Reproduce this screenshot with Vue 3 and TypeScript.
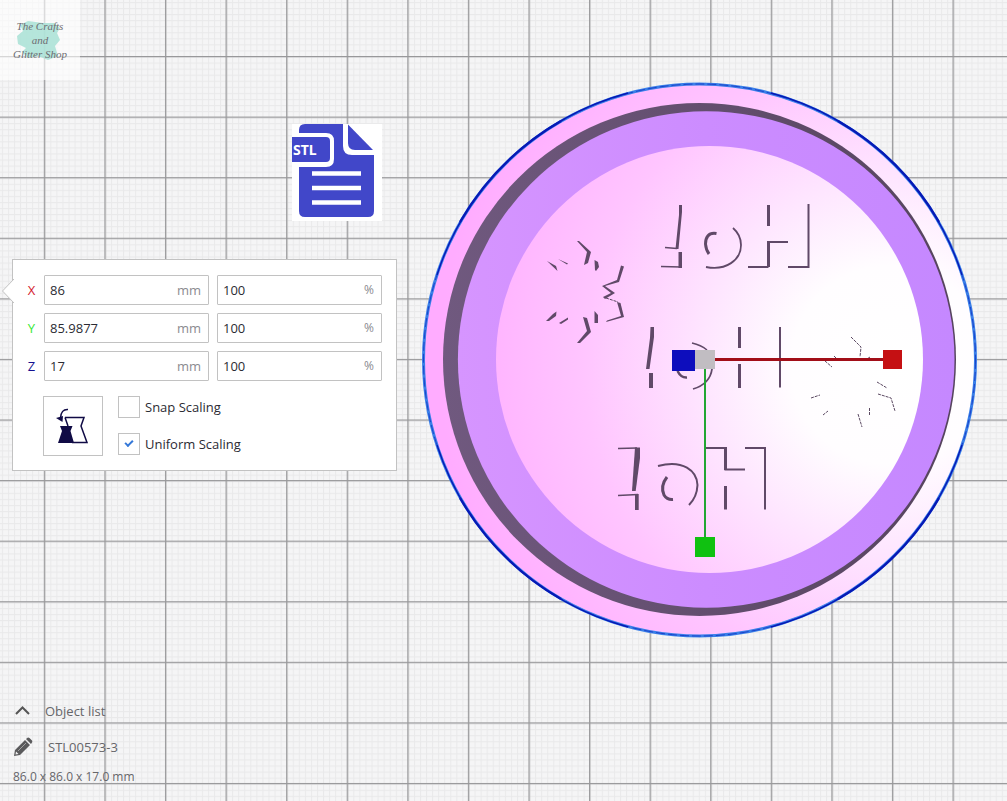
<script setup lang="ts">
import { ref } from 'vue'

interface Axis {
  name: string
  tone: string
  size: string
  percent: string
}

const axes = ref<Axis[]>([
  { name: 'X', tone: 'red', size: '86', percent: '100' },
  { name: 'Y', tone: 'green', size: '85.9877', percent: '100' },
  { name: 'Z', tone: 'blue', size: '17', percent: '100' },
])
const snapScaling = ref(false)
const uniformScaling = ref(true)
const listOpen = ref(false)
</script>

<template>
  <main class="viewport">
    <svg class="scene" viewBox="0 0 1007 801" preserveAspectRatio="xMidYMid slice" aria-hidden="true">
      <defs>
        <pattern id="minor" x="44.3" y="56.5" width="6.06" height="6.06" patternUnits="userSpaceOnUse">
          <path d="M0 .5H6.06M.5 0V6.06" stroke="#e9e9ea" stroke-width="1" fill="none" />
        </pattern>
        <pattern id="major" x="43.8" y="56" width="60.58" height="60.58" patternUnits="userSpaceOnUse">
          <path d="M0 .7H60.58M.7 0V60.58" stroke="#98989a" stroke-width="1.3" fill="none" />
        </pattern>
        <radialGradient id="pink" gradientUnits="userSpaceOnUse" cx="890" cy="365" r="450">
          <stop offset="0" stop-color="#ffffff" />
          <stop offset=".22" stop-color="#fffdff" />
          <stop offset=".42" stop-color="#fee5ff" />
          <stop offset=".68" stop-color="#ffc5ff" />
          <stop offset=".88" stop-color="#ffb5ff" />
          <stop offset="1" stop-color="#ffacff" />
        </radialGradient>
        <linearGradient id="purple" x1="0" x2="1" y1="0" y2="0">
          <stop offset="0" stop-color="#d695ff" />
          <stop offset=".5" stop-color="#cc8cff" />
          <stop offset="1" stop-color="#c588ff" />
        </linearGradient>
        <linearGradient id="wall" x1="0" x2="1" y1="0" y2="0">
          <stop offset="0" stop-color="#70597f" />
          <stop offset="1" stop-color="#56445e" />
        </linearGradient>
      </defs>

      <rect width="1007" height="801" fill="#f5f5f6" />
      <rect width="1007" height="801" fill="url(#minor)" />
      <rect width="1007" height="801" fill="url(#major)" />

      <!-- file badge -->
      <rect x="292" y="124" width="90" height="97" fill="#fff" />
      <path fill="#4147c9" d="M305 124H343V146Q343 155 352 155H374V211Q374 217 368 217H305Q299 217 299 211V167H326Q334 167 334 159V141Q334 133 326 133H299V130Q299 124 305 124Z" />
      <path fill="#4147c9" d="M348 124.500L373 150H355Q348 150 348 143Z" />
      <path fill="#4147c9" d="M292 137H326Q330 137 330 141V158Q330 162 326 162H292Z" />
      <path stroke="#fff" stroke-width="4.500" d="M312 173.500H361M312 188H361M312 202.500H361" />
      <text class="badge-text" x="293" y="155">STL</text>

      <!-- round mould -->
      <circle cx="699.500" cy="360" r="276" fill="url(#pink)" stroke="#397fe8" stroke-width="3" />
      <g fill="none" stroke="#0719b5">
        <circle cx="699.500" cy="360" r="276" stroke-width=".6" stroke-dasharray="9 3" />
        <path stroke-width="1.300" d="M437 275A276 276 0 0 1 628 93M771 93A276 276 0 0 1 962 275M962 445A276 276 0 0 1 771 627M628 627A276 276 0 0 1 437 445" />
        <path stroke-width="2.200" d="M460 222A276 276 0 0 1 561 121M838 121A276 276 0 0 1 939 222M939 498A276 276 0 0 1 838 599M561 599A276 276 0 0 1 460 498" />
      </g>
      <circle cx="699.500" cy="359.500" r="256.500" fill="url(#wall)" />
      <circle cx="706.200" cy="359.500" r="248.300" fill="url(#purple)" />
      <circle cx="709.500" cy="359.500" r="213.500" fill="url(#pink)" />

      <!-- relief shadows -->
      <g fill="none" stroke="#604968" stroke-width="2">
        <path d="M665 247.500L677 248.500M661 266.500L681 267" stroke-width="1.500" />
        <path d="M716.500 233.500C708 232 705.500 238 705.500 244Q706 250 709 254" stroke-width="3" />
        <path d="M706 267C726 271 741 260 741 245Q741 235 733 228" stroke-width="1.800" />
        <path d="M768.500 205V226M768.500 241V267" stroke-width="3" />
        <path d="M788 242H768.500M768.500 267H748M808.500 204V267H788" />
        <path d="M692 343Q701 345 707 350" stroke-width="1.500" />
        <path d="M677.500 371Q681 378 687 377.500" stroke-width="2.500" />
        <path d="M712 369Q710 384 693 389" stroke-width="1.800" />
        <path d="M739.500 327V348M739.500 364V388" stroke-width="3" />
        <path d="M780 327V387.500" />
        <path d="M618 448.500L637 448M618 495.500L638 494.500" stroke-width="1.500" />
        <path d="M658 466C683 459 697 471 697.500 485Q697 497 689 505" />
        <path d="M667 477Q660 486 664 495Q667 500 673 499.500" stroke-width="3" />
        <path d="M706 448H725.500V469.500H745M745 448H765V509.500" />
        <path d="M725.500 447V470M725.500 486V509.500" stroke-width="3" />
      </g>
      <g fill="#604968">
        <path d="M679 205H682V212L678.500 249H675.500L679 215Z" />
        <path d="M678.500 252H682V268H678.500Z" />
        <path d="M650.500 327H654V337L649.500 369H646L650 338Z" />
        <path d="M649 373H653V388H649Z" />
        <path d="M635 447.500H640V458L635.700 491H632Z" />
        <path d="M635 494H638.700V510H635Z" />
        <path d="M577 241L579 241L591 252L588 263L584 265L587 252Z" />
        <path d="M594.500 260L598 262L599 267L596 271L595 270Z" />
        <path d="M547 261L556 266L557.500 271Z" />
        <path d="M558 259L568 263.500L567 264.500Z" />
        <path d="M621 265.500L624 266.500L619 282L605 286L615 293L605 299L603 297L611 293L602 286L617 280Z" />
        <path d="M617 302L620.500 303L624 317L606 322L607 320.500L621 316Z" />
        <path d="M546 321L553 314L556.500 311.500L556 316L549 321Z" />
        <path d="M559 323L568 317.500V319.500L561 324Z" />
        <path d="M594.500 311L598 315V323L594.500 323Z" />
        <path d="M583 317L587 318L591 332L580 343H577L587 331Z" />
      </g>
      <g fill="none" stroke="#5b4962" stroke-width="1" stroke-dasharray="3 1">
        <path d="M606 298L618 302M851 337L861 347L860 357M834 356L837 359M870 357L867 359" />
        <path d="M825 361L832 367M811 398L820 395M823 415L828 411M877 382L887 388M878 394L891 398L895 411M869.500 408V415M858 414L862 427" />
      </g>

      <!-- scale handles -->
      <path d="M705 369V537" stroke="#22a634" stroke-width="2" />
      <path d="M715 359.500H884" stroke="#a20e18" stroke-width="3" />
      <rect x="695" y="350" width="20" height="19" fill="#c1bdc2" />
      <rect x="672" y="350" width="23" height="21" fill="#0d0dbd" />
      <rect x="883" y="350" width="19" height="19" fill="#c51013" />
      <rect x="695" y="537" width="20" height="20" fill="#10c111" />
    </svg>

    <header class="brand">
      <svg class="splash" viewBox="0 0 80 80" aria-hidden="true">
        <path fill="#a9e2d6" d="M20 25L28 21L43 23L54 23L60 28L57 33L60 40L55 46L58 56L48 60L38 56L28 58L22 52L26 48L18 44L17 36L23 31Z" />
      </svg>
      <p class="brand-name">The Crafts<br />and<br />Glitter Shop</p>
    </header>

    <form class="panel" @submit.prevent>
      <svg class="pointer" viewBox="0 0 13 26" aria-hidden="true">
        <path d="M13 1L1.500 13L13 25" fill="#fff" stroke="#c2c2c2" />
      </svg>
      <div v-for="axis in axes" :key="axis.name" class="row">
        <label :class="['axis', axis.tone]" :for="'size-' + axis.name">{{ axis.name }}</label>
        <div class="field">
          <input :id="'size-' + axis.name" v-model="axis.size" type="text" />
          <span>mm</span>
        </div>
        <div class="field">
          <input v-model="axis.percent" type="text" :aria-label="axis.name + ' percent'" />
          <span class="percent">%</span>
        </div>
      </div>
      <div class="options">
        <button class="reset" type="button" aria-label="Reset">
          <svg viewBox="1 1 58 58" aria-hidden="true">
            <path d="M22 21.500H41L38 30L44 46.500H29M22 21.500L25 30" fill="none" stroke="#100b45" stroke-width="1.500" />
            <path d="M17 30H29.500L27.500 35L31 47H15L19 35Z" fill="#100b45" />
            <path d="M25 13.500Q18 13 17.500 22" fill="none" stroke="#100b45" stroke-width="1.500" />
            <path d="M13 22L20 20L19.500 26Z" fill="#100b45" />
          </svg>
        </button>
        <div class="checks">
          <label class="check"><input v-model="snapScaling" type="checkbox" />Snap Scaling</label>
          <label class="check"><input v-model="uniformScaling" type="checkbox" />Uniform Scaling</label>
        </div>
      </div>
    </form>

    <footer class="objects">
      <button class="line toggle" type="button" :aria-expanded="listOpen" @click="listOpen = !listOpen">
        <svg viewBox="0 0 20 20" aria-hidden="true">
          <path d="M3 13L9.500 6.500L16 13" fill="none" stroke="#555" stroke-width="2" />
        </svg>
        Object list
      </button>
      <button class="line name" type="button">
        <svg viewBox="0 0 20 20" aria-hidden="true">
          <path fill="#5a5a5c" fill-rule="evenodd" d="M1 19L2 13L12 3L17 8L7 18ZM3 14.500L2.500 17.500L5.500 17Z" />
          <path fill="#5a5a5c" d="M13 2L14.500 .7Q15.500 0 16.500 1L19 3.500Q19.700 4.500 19 5.500L18 7Z" />
          <path d="M5 14L13 6" stroke="#b5b5b5" stroke-width=".8" />
        </svg>
        STL00573-3
      </button>
      <p class="size">86.0 x 86.0 x 17.0 mm</p>
    </footer>
  </main>
</template>

<style>
body {
  margin: 0;
}
</style>

<style scoped>
.viewport {
  position: relative;
  display: flex;
  flex-direction: column;
  align-items: flex-start;
  box-sizing: border-box;
  min-height: 100vh;
  overflow: hidden;
  font-family: "Open Sans", "Noto Sans", sans-serif;
  font-size: 13px;
  line-height: 20px;
  color: #2b2b33;
}

.scene {
  position: absolute;
  inset: 0;
  width: 100%;
  height: 100%;
}

.badge-text {
  font-family: "Noto Sans", sans-serif;
  font-size: 14px;
  font-weight: 700;
  fill: #fff;
}

.brand {
  position: relative;
  display: flex;
  align-items: center;
  justify-content: center;
  width: 80px;
  height: 80px;
  background: rgba(255, 255, 255, 0.6);
}

.splash {
  position: absolute;
  inset: 0;
  opacity: 0.85;
}

.brand-name {
  position: relative;
  margin: 0;
  font-family: "Liberation Serif", serif;
  font-size: 11px;
  font-style: italic;
  line-height: 14px;
  text-align: center;
  white-space: nowrap;
  color: #6d6d72;
}

.panel {
  position: relative;
  display: flex;
  flex-direction: column;
  gap: 8px;
  box-sizing: border-box;
  width: 385px;
  max-width: calc(100% - 24px);
  margin: 179px 12px 24px;
  padding: 15px 14px 14px;
  border: 1px solid #c2c2c2;
  background: #fff;
}

.pointer {
  position: absolute;
  top: 18px;
  left: -12px;
  width: 13px;
  height: 26px;
}

.row {
  display: flex;
  gap: 8px;
}

.axis {
  width: 9px;
  line-height: 30px;
  text-align: center;
}

.red {
  color: #d3202b;
}

.green {
  color: #35e835;
}

.blue {
  color: #15108f;
}

.field {
  display: flex;
  flex: 1;
  align-items: center;
  box-sizing: border-box;
  min-width: 0;
  height: 30px;
  padding: 0 7px 0 5px;
  border: 1px solid #c2c2c2;
  border-radius: 1px;
  background: #fff;
}

.field input {
  flex: 1;
  min-width: 0;
  padding: 0;
  border: 0;
  outline: 0;
  font: inherit;
  color: inherit;
  background: transparent;
}

.field span {
  color: #8b8b90;
}

.field .percent {
  font-size: 12px;
}

.options {
  display: flex;
  gap: 15px;
  margin: 7px 0 0 16px;
}

.reset {
  box-sizing: border-box;
  width: 60px;
  height: 60px;
  padding: 0;
  border: 1px solid #c2c2c2;
  background: #fff;
}

.reset svg {
  display: block;
  width: 100%;
}

.checks {
  display: flex;
  flex-direction: column;
  gap: 15px;
}

.check {
  display: flex;
  align-items: center;
  gap: 5px;
  height: 22px;
}

.check input {
  display: grid;
  place-items: center;
  box-sizing: border-box;
  width: 22px;
  height: 22px;
  margin: 0;
  appearance: none;
  border: 1px solid #c2c2c2;
  background: #fff;
}

.check input:checked::after {
  width: 6px;
  height: 3px;
  margin-bottom: 3px;
  border: solid #3478d8;
  border-width: 0 0 2px 2px;
  content: "";
  transform: rotate(-45deg);
}

.objects {
  position: relative;
  display: flex;
  flex-direction: column;
  align-items: flex-start;
  margin: auto 0 0 13px;
  padding-bottom: 14px;
  color: #66666a;
}

.line {
  display: flex;
  align-items: center;
  height: 20px;
  padding: 0;
  border: 0;
  font: inherit;
  color: inherit;
  background: none;
}

.line svg {
  width: 20px;
  height: 20px;
}

.toggle {
  gap: 12px;
  margin-bottom: 16px;
}

.name {
  gap: 15px;
  margin-bottom: 10px;
}

.size {
  margin: 0;
  font-size: 12px;
}
</style>
